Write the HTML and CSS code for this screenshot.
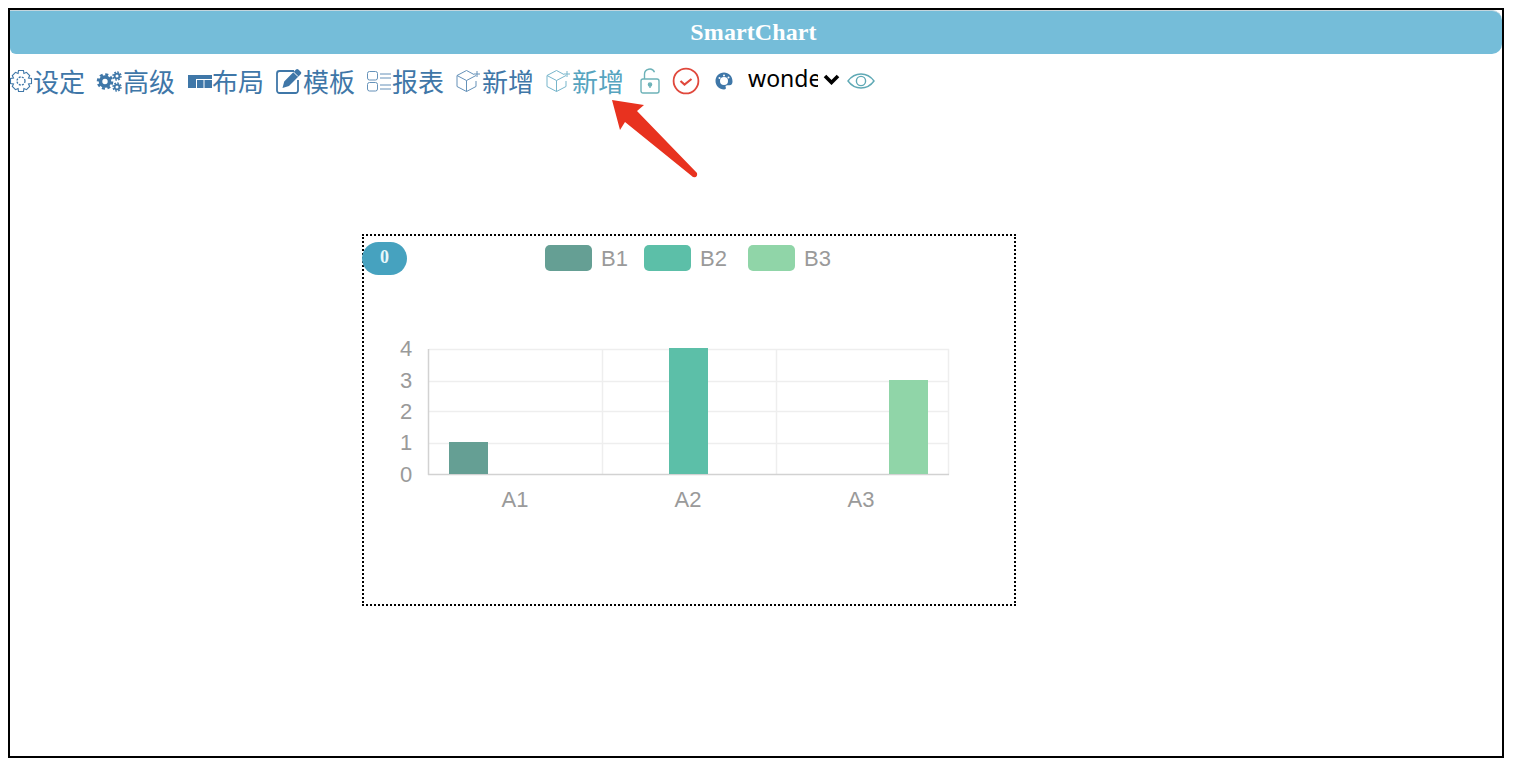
FILE: index.html
```html
<!DOCTYPE html>
<html lang="zh-CN">
<head>
    <meta charset="UTF-8">
    <title>SmartChart</title>
    <link rel="stylesheet" href="styles.css">
</head>
<body>
    <div class="frame">
        <div class="head">SmartChart</div>

        <div class="toolbar">
            <a class="tool tool-first">
                <svg class="ico" width="24" height="24" viewBox="0 0 24 24" fill="none" stroke="currentColor"><path stroke-width="1.100" d="M9.500 1.500h5l.4 3 2.600-1.200 3.200 3.200-1.200 2.600 3 .4v5l-3 .4 1.200 2.600-3.200 3.200-2.600-1.200-.4 3h-5l-.4-3-2.600 1.200-3.200-3.200 1.200-2.600-3-.4v-5l3-.4-1.200-2.600 3.200-3.200 2.600 1.200z"/><circle cx="12" cy="12" r="4" stroke-width="1.300" stroke-dasharray="2 1.200"/></svg>设定
            </a>
            <a class="tool">
                <svg class="ico" width="27" height="24" viewBox="0 0 27 24" fill="none" stroke="currentColor"><circle cx="9" cy="12.500" r="4.500" stroke-width="3.600"/><circle cx="9" cy="12.500" r="7" stroke-width="2.600" stroke-dasharray="3 2.500"/><circle cx="21" cy="7" r="2.400" stroke-width="1.800"/><circle cx="21" cy="7" r="4" stroke-width="1.400" stroke-dasharray="1.800 1.300"/><circle cx="21" cy="18" r="2.400" stroke-width="1.800"/><circle cx="21" cy="18" r="4" stroke-width="1.400" stroke-dasharray="1.800 1.300"/></svg>高级
            </a>
            <a class="tool">
                <svg class="ico" width="26" height="24" viewBox="0 0 26 24"><path fill="currentColor" d="M2 6h24v13H2z"/><path fill="none" stroke="#fff" d="M10.500 10v9M10.500 10.500H26M18 11v8"/></svg>布局
            </a>
            <a class="tool">
                <svg class="ico" width="28" height="28" viewBox="0 0 28 28" fill="none" stroke="currentColor"><path stroke-width="1.800" d="M23 13v10.500a2.500 2.500 0 0 1-2.500 2.500h-16A2.500 2.500 0 0 1 2 23.500V6.500A2.500 2.500 0 0 1 4.500 4H19"/><path fill="currentColor" stroke="none" d="M7.500 21l1.700-6.500L21 2.500c.8-.8 1.600-.8 2.400 0l2.300 2.300c.8.800.8 1.600 0 2.400L14 19z"/><path stroke="#fff" d="M18.500 5l4.500 4.500"/></svg>模板
            </a>
            <a class="tool">
                <svg class="ico thin" width="26" height="24" viewBox="0 0 26 24" fill="none" stroke="currentColor"><rect x="1.500" y="2.500" width="10" height="8.500" rx="2"/><rect x="1.500" y="13.500" width="10" height="8.500" rx="2"/><path d="M14 5h11M14 9h11M14 16h11M14 20h11"/></svg>报表
            </a>
            <a class="tool">
                <svg class="ico thin" width="27" height="24" viewBox="0 0 27 24" fill="none" stroke="currentColor"><path d="M19 5.500l-7.500-4-9.500 5v11l9.500 5 9.500-5V12M2 6.500l9.500 5v11M11.500 11.500l9.500-5"/><path d="M19 5h6M22 2v6"/></svg>新增
            </a>
            <a class="tool tool-light">
                <svg class="ico thin" width="27" height="24" viewBox="0 0 27 24" fill="none" stroke="currentColor"><path d="M19 5.500l-7.500-4-9.500 5v11l9.500 5 9.500-5V12M2 6.500l9.500 5v11M11.500 11.500l9.500-5"/><path d="M19 5h6M22 2v6"/></svg>新增
            </a>
            <svg class="lock" width="20" height="26" viewBox="0 0 20 26" fill="none" stroke="currentColor" stroke-width="1.400"><rect x="1" y="11" width="18" height="14" rx="2"/><path d="M4.500 11V6.500a5.200 5.200 0 0 1 10-2.200"/><circle cx="10" cy="16.500" r="1.600" fill="currentColor"/><path d="M10 17v3"/></svg>
            <svg class="check" width="28" height="28" viewBox="0 0 28 28" fill="none" stroke="currentColor"><circle cx="14" cy="14" r="12.400" stroke-width="1.800"/><path d="M8.500 14l4 3.500 7-5.500" stroke-width="2.200"/></svg>
            <svg class="palette" width="18" height="18" viewBox="0 0 18 18"><path fill="#3f77a8" d="M9 .5C4 .5.500 4.300.500 9c0 4.500 3.800 8.500 8.500 8.500 1.800 0 2.300-1.200 1.700-2.300-.6-1.200.3-2 1.600-2H14.500c2 0 3-1.500 3-3.700C17.500 4 13.800.5 9 .5z"/><circle cx="9" cy="9" r="4" fill="#fff"/><circle cx="4.500" cy="6" r="1" fill="#fff"/><circle cx="9" cy="3.400" r="1" fill="#fff"/><circle cx="13.500" cy="5.500" r="1" fill="#fff"/></svg>
            <span class="picker">wonde</span>
            <svg class="caret" width="17" height="11" viewBox="0 0 17 11" fill="none" stroke="#000" stroke-width="3.600"><path d="M2 2l6.500 6.500L15 2"/></svg>
            <svg class="eye" width="28" height="18" viewBox="0 0 28 18" fill="none" stroke="currentColor" stroke-width="1.400"><path d="M1 9c3.500-4.800 8-7 13-7s9.500 2.200 13 7c-3.500 4.800-8 7-13 7S4.500 13.800 1 9z"/><circle cx="14" cy="9" r="4.600"/></svg>
        </div>

        <!-- red pointer drawn on top of the screenshot -->
        <svg class="arrow" width="90" height="84" viewBox="0 0 90 84"><path fill="#e8321f" d="M2 3L34 8 27 14 87 76Q88 81 83 80L15 25 10 33z"/></svg>

        <div class="canvas">
            <div class="chart-box">
                <span class="badge">0</span>
                <svg class="chart" width="650" height="368" viewBox="0 0 650 368">
                    <rect class="b1" x="181" y="9" width="47" height="26" rx="5"/>
                    <text class="lab" x="237" y="30">B1</text>
                    <rect class="b2" x="280" y="9" width="47" height="26" rx="5"/>
                    <text class="lab" x="336" y="30">B2</text>
                    <rect class="b3" x="384" y="9" width="47" height="26" rx="5"/>
                    <text class="lab" x="440" y="30">B3</text>

                    <g class="grid">
                        <path d="M65 113.500H585M65 145.500H585M65 175.500H585M65 207.500H585"/>
                        <path d="M238.500 113V239M412.500 113V239M584.500 113V239"/>
                    </g>
                    <path class="axis" d="M64.500 113V239M64 238.500H585"/>

                    <rect class="b1" x="85" y="206" width="39" height="32"/>
                    <rect class="b2" x="305" y="112" width="39" height="126"/>
                    <rect class="b3" x="525" y="144" width="39" height="94"/>

                    <text class="lab" x="42" y="120" text-anchor="middle">4</text>
                    <text class="lab" x="42" y="152" text-anchor="middle">3</text>
                    <text class="lab" x="42" y="183" text-anchor="middle">2</text>
                    <text class="lab" x="42" y="214" text-anchor="middle">1</text>
                    <text class="lab" x="42" y="246" text-anchor="middle">0</text>
                    <text class="lab" x="151" y="271" text-anchor="middle">A1</text>
                    <text class="lab" x="324" y="271" text-anchor="middle">A2</text>
                    <text class="lab" x="497" y="271" text-anchor="middle">A3</text>
                </svg>
            </div>
        </div>
    </div>
</body>
</html>
```

FILE: styles.css
```css
* {
    box-sizing: border-box;
}

body {
    margin: 0;
    background: #fff;
    font-family: "Noto Sans CJK SC", "Liberation Sans", sans-serif;
}

.frame {
    position: relative;
    width: 1496px;
    height: 750px;
    margin: 8px 0 0 8px;
    border: 2px solid #000;
}

.head {
    height: 44px;
    padding-right: 5px;
    background: #75bdd9;
    border-top: 1px solid #c4d6de;
    border-radius: 0 10px 10px 6px;
    color: #fff;
    font: bold 24px/42px "Liberation Serif", serif;
    letter-spacing: 0.1px;
    text-align: center;
}

.toolbar {
    display: flex;
    align-items: center;
    height: 54px;
    color: #3f77a8;
    font-size: 26px;
    white-space: nowrap;
}

.tool {
    display: flex;
    align-items: center;
    margin-right: 11px;
    line-height: 54px;
}

.tool-first {
    margin-left: -1px;
}

.tool-light {
    color: #56a4bf;
}

.ico {
    flex: none;
}

.thin {
    opacity: 0.8;
}

.lock {
    margin-left: 5px;
    color: #6db2b8;
}

.check {
    margin-left: 12px;
    color: #e0483c;
}

.palette {
    margin-left: 15px;
}

.picker {
    width: 70px;
    margin: -6px 0 0 15px;
    overflow: hidden;
    color: #000;
    font: 23px/42px "Noto Sans", sans-serif;
}

.caret {
    margin: -3px 0 0 5px;
}

.eye {
    margin-left: 7px;
    color: #5fa9b5;
}

.arrow {
    position: absolute;
    left: 600px;
    top: 87px;
}

.canvas {
    padding: 126px 0 0 352px;
}

.chart-box {
    position: relative;
    width: 654px;
    height: 372px;
    border: 2px dotted #000;
}

.badge {
    position: absolute;
    left: -2px;
    top: 6px;
    width: 45px;
    height: 33px;
    background: #46a2bf;
    border-radius: 17px;
    color: #e8f7fb;
    font: bold 18px/30px "Liberation Serif", serif;
    text-align: center;
}

.chart {
    display: block;
}

.lab {
    fill: #9a9a9a;
    font: 22px "Liberation Sans", sans-serif;
}

.b1 {
    fill: #659f94;
}

.b2 {
    fill: #5cbfa8;
}

.b3 {
    fill: #90d5a8;
}

.grid {
    fill: none;
    stroke: #eeeeee;
    stroke-width: 1.5;
}

.axis {
    fill: none;
    stroke: #d2d2d2;
    stroke-width: 1.5;
}
```
